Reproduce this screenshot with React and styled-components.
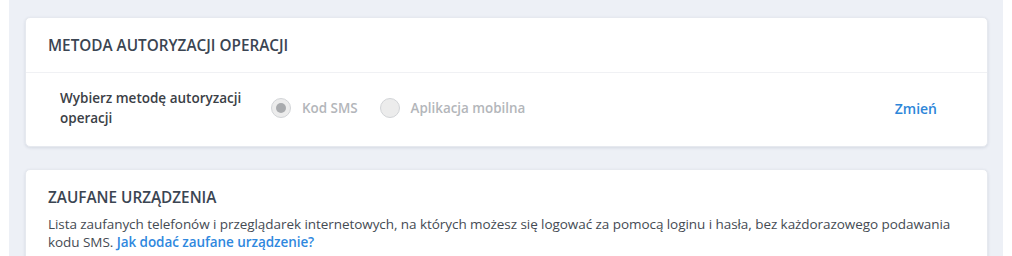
import React from 'react';
import styled, { createGlobalStyle } from 'styled-components';

const Global = createGlobalStyle`
  html, body {
    margin: 0;
    padding: 0;
    background: #ffffff;
  }
  body {
    font-family: "Open Sans", "Noto Sans", sans-serif;
    color: #3d4650;
  }
`;

const Page = styled.div`
  margin: 0 9px;
  background: #edf0f6;
  padding: 17px 15px 0 16px;
  height: 256px;
  box-sizing: border-box;
  display: flex;
  flex-direction: column;
  gap: 22px;
`;

const Card = styled.section`
  background: #ffffff;
  border-radius: 5px;
  box-shadow: 0 1px 3px rgba(40, 60, 90, 0.12);
  border: 1px solid #e6e9ef;
`;

const CardHead = styled.div`
  padding: 16px 22px 16px;
  border-bottom: 1px solid #f0f1f4;
`;

const Title = styled.h2`
  margin: 0;
  font-size: 15.3px;
  font-weight: 600;
  color: #3b4552;
  line-height: 22px;
`;

const Row = styled.div`
  display: flex;
  align-items: center;
  padding: 15px 50px 18px 34px;
`;

const Label = styled.div`
  width: 211px;
  font-size: 13.5px;
  font-weight: 600;
  color: #3b4046;
  line-height: 20px;
`;

const Options = styled.div`
  display: flex;
  align-items: center;
  gap: 22px;
  flex: 1;
`;

const Option = styled.label`
  display: flex;
  align-items: center;
  gap: 11px;
  font-size: 13.4px;
  font-weight: 600;
  color: #b3b6ba;
`;

const Radio = styled.span`
  width: 20px;
  height: 20px;
  border-radius: 50%;
  border: 1px solid #d2d4d7;
  background: #ececec;
  display: flex;
  align-items: center;
  justify-content: center;
  box-sizing: border-box;

  &::after {
    content: '';
    width: 10px;
    height: 10px;
    border-radius: 50%;
    background: ${p => (p.$checked ? '#a9abae' : 'transparent')};
  }
`;

const Action = styled.a`
  font-size: 14px;
  font-weight: 600;
  color: #2d86d9;
  text-decoration: none;
`;

const Body = styled.div`
  padding: 16px 22px;
`;

const Text = styled.p`
  margin: 7px 0 0;
  font-size: 13.5px;
  line-height: 18px;
  color: #454b53;
  letter-spacing: -0.06px;
`;

const Link = styled.a`
  color: #2f88de;
  font-weight: 600;
  text-decoration: none;
`;

export default function App() {
  return (
    <>
      <Global />
      <Page>
        <Card>
          <CardHead>
            <Title>METODA AUTORYZACJI OPERACJI</Title>
          </CardHead>
          <Row>
            <Label>Wybierz metodę autoryzacji operacji</Label>
            <Options>
              <Option>
                <Radio $checked />
                Kod SMS
              </Option>
              <Option>
                <Radio />
                Aplikacja mobilna
              </Option>
            </Options>
            <Action href="#">Zmień</Action>
          </Row>
        </Card>
        <Card>
          <Body>
            <Title>ZAUFANE URZĄDZENIA</Title>
            <Text>
              Lista zaufanych telefonów i przeglądarek internetowych, na których możesz się logować za pomocą loginu i hasła, bez każdorazowego podawania kodu SMS.{' '}
              <Link href="#">Jak dodać zaufane urządzenie?</Link>
            </Text>
          </Body>
        </Card>
      </Page>
    </>
  );
}
